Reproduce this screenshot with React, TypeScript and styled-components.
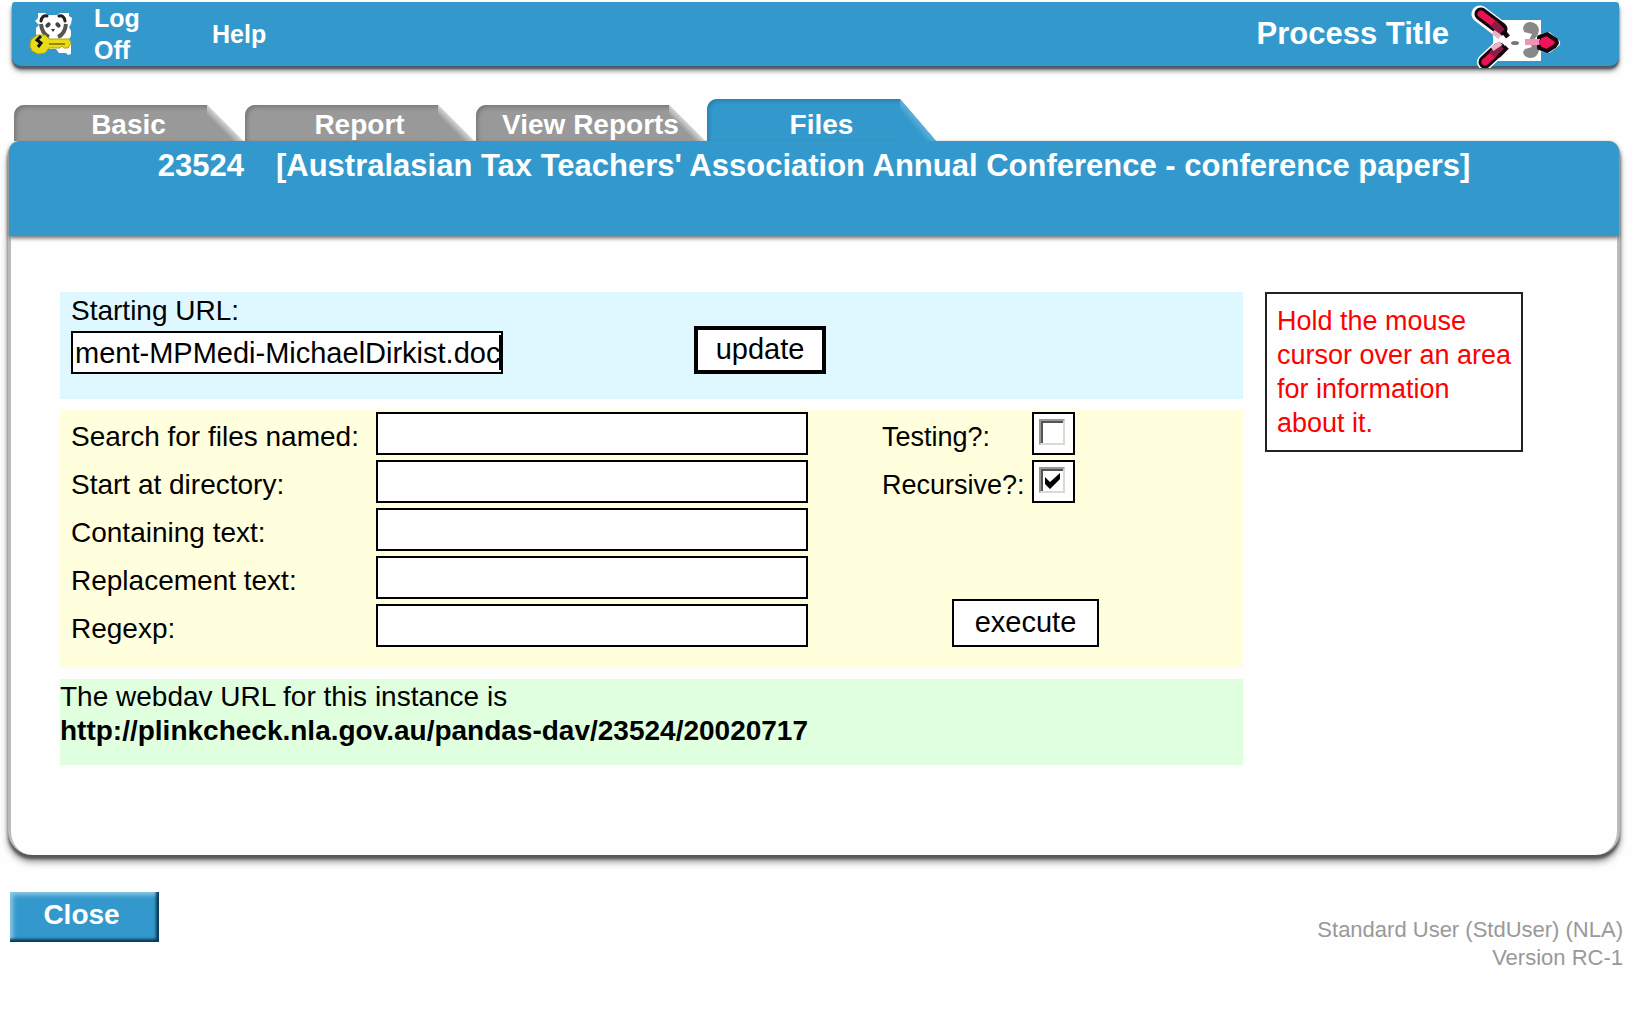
import React from "react";
import styled, { createGlobalStyle } from "styled-components";

const blue = "#3399cc";
const sans = '"Liberation Sans", Arial, sans-serif';

const GlobalStyle = createGlobalStyle`
  * { box-sizing: border-box; }
  body { margin: 0; background: #fefefe; font-family: ${sans}; font-size: 28px; line-height: 34px; color: #000; }
  button, input { font-family: inherit; }
`;

const Page = styled.div`
  padding: 2px 22px 60px 10px;
`;

const TopBar = styled.header`
  display: flex;
  align-items: center;
  height: 64px;
  margin: 0 4px 0 2px;
  padding: 0 58px 0 17px;
  background: ${blue};
  border-radius: 3px 3px 9px 9px;
  box-shadow: 0 3px 2px #4d5a63, 0 5px 5px rgba(0, 0, 0, 0.45);
`;

const BarLinks = styled.nav`
  display: flex;
  align-items: center;
  gap: 54px;
  padding-left: 20px;
`;

const BarLink = styled.a`
  max-width: 64px;
  color: #fff;
  font-size: 25px;
  font-weight: bold;
  line-height: 32px;
  text-decoration: none;
`;

const ProcessTitle = styled.span`
  margin-left: auto;
  margin-right: 22px;
  color: #fff;
  font-size: 31px;
  font-weight: bold;
`;

const TabList = styled.nav`
  display: flex;
  align-items: flex-end;
  gap: 2px;
  height: 42px;
  margin-top: 33px;
  padding-left: 4px;
`;

const Tab = styled.button<{ $active?: boolean }>`
  position: relative;
  width: 229px;
  height: ${(p) => (p.$active ? "42px" : "36px")};
  padding: ${(p) => (p.$active ? "10px" : "4px")} 0 0;
  border: 0;
  border-radius: 10px 0 0 0;
  background: ${(p) => (p.$active ? blue : "#999")};
  box-shadow: inset 2px 2px 4px ${(p) => (p.$active ? "#2b80ab" : "#777")};
  color: #fff;
  font-size: 28px;
  font-weight: bold;
  line-height: 32px;

  &::after {
    content: "";
    position: absolute;
    top: 0;
    right: 0;
    width: 36px;
    height: 100%;
    background: linear-gradient(
      to top right,
      ${(p) => (p.$active ? blue : "#999")} 36%,
      ${(p) => (p.$active ? "#5fb0da" : "#d4d4d4")} 50%,
      #fefefe 51%
    );
  }
`;

const TabText = styled.span`
  position: relative;
  z-index: 1;
`;

const Panel = styled.main`
  border: solid #bbb;
  border-width: 0 3px;
  margin: 0 3px 0 -2px;
  border-radius: 14px 14px 24px 24px;
  background: #fefefe;
  box-shadow: 0 4px 3px #555, 0 7px 7px rgba(0, 0, 0, 0.4);
`;

const PanelTitle = styled.h1`
  display: flex;
  justify-content: center;
  gap: 32px;
  height: 95px;
  margin: 0 -2px;
  padding: 8px 0 0;
  border-radius: 10px 10px 0 0;
  background: ${blue};
  box-shadow: 0 2px 4px #666;
  color: #fff;
  font-size: 31px;
  line-height: 34px;
`;

const Content = styled.div`
  display: grid;
  grid-template-columns: minmax(0, 1fr) 258px;
  gap: 22px;
  align-items: start;
  padding: 56px 94px 90px 49px;
`;

const Sections = styled.div`
  display: grid;
  gap: 11px;
`;

const UrlForm = styled.form`
  display: flex;
  align-items: flex-start;
  gap: 191px;
  height: 107px;
  padding: 2px 11px;
  background: #dff8ff;
`;

const UrlField = styled.div`
  position: relative;
  display: grid;
  gap: 3px;
  width: 432px;
`;

const TextInput = styled.input`
  width: 432px;
  height: 43px;
  padding: 2px 2px 0;
  border: 2px solid #000;
  border-radius: 0;
  outline: 0;
  background: #fff;
  font-size: 29px;
`;

const Caret = styled.i`
  position: absolute;
  right: 0;
  bottom: 4px;
  width: 4px;
  height: 35px;
  background: #000;
`;

const ActionButton = styled.button<{ $default?: boolean }>`
  width: ${(p) => (p.$default ? "132px" : "147px")};
  height: 48px;
  padding: 0 0 2px;
  border: ${(p) => (p.$default ? "4px" : "2px")} solid #000;
  background: #fff;
  color: #000;
  font-size: 29px;
  line-height: 34px;
`;

const UpdateSlot = styled.div`
  padding-top: 32px;
`;

const SearchForm = styled.form`
  display: grid;
  grid-template-columns: 737px 217px;
  column-gap: 74px;
  padding: 2px 11px 21px;
  background: #ffffdd;
`;

const Rows = styled.div`
  display: grid;
  align-content: start;
  gap: 5px;
`;

const Row = styled.div<{ $option?: boolean }>`
  display: grid;
  grid-template-columns: ${(p) => (p.$option ? "150px" : "305px")} auto;
  align-items: center;
  justify-content: start;
  font-size: ${(p) => (p.$option ? "27px" : "28px")};
`;

const FieldLabel = styled.label`
  padding-top: 6px;
`;

const Options = styled.div`
  display: flex;
  flex-direction: column;
  justify-content: space-between;
`;

const CheckFrame = styled.span`
  display: flex;
  width: 43px;
  height: 43px;
  padding: 5px;
  border: 2px solid #000;
  background: #fff;
`;

const CheckBox = styled.input`
  appearance: none;
  width: 26px;
  height: 26px;
  margin: 0;
  border: 2px solid;
  border-color: #999 #ddd8d0 #ddd8d0 #999;
  box-shadow: inset 2px 2px 0 #555;
  background: #fff;

  &:checked {
    background: #fff
      url("data:image/svg+xml,%3Csvg xmlns='http://www.w3.org/2000/svg' viewBox='0 0 22 22'%3E%3Cpath d='M4 8l5 5L19 4v6L9 20l-5-5z'/%3E%3C/svg%3E")
      center / 22px 22px no-repeat;
  }
`;

const ExecuteSlot = styled.div`
  display: flex;
  justify-content: flex-end;
`;

const DavNote = styled.section`
  height: 86px;
  padding-top: 1px;
  background: #dfffdf;
`;

const DavUrl = styled.strong`
  display: block;
`;

const HelpBox = styled.aside`
  min-height: 159px;
  padding: 10px 0 10px 10px;
  border: 2px solid #222;
  color: #f00;
  font-size: 27px;
`;

const Footer = styled.footer`
  display: flex;
  justify-content: space-between;
  padding-top: 37px;
`;

const CloseButton = styled.button`
  width: 149px;
  height: 50px;
  padding: 0 6px 4px 0;
  border: 0;
  background: ${blue};
  box-shadow: inset -3px -3px 3px #0a3a56, inset 3px 3px 4px #8cc8e6;
  color: #fff;
  font-size: 28px;
  font-weight: bold;
`;

const Version = styled.p`
  margin: 24px 0 0;
  color: #999;
  font-size: 22px;
  line-height: 28px;
  text-align: right;
`;

const Icon = styled.svg`
  display: block;
  flex: none;
`;

const PandaKey = () => (
  <Icon width="45" height="46" viewBox="0 0 45 46" aria-hidden="true">
    <path d="M9 2h7l3 2h9l3-2h9v3l3 2-1 6-2 3 2 4v5l-2 3 2 3v12l-3 1-2-2H30l-3-4H9l-1-4 2-4-3-3V17l3-3-4-4 3-3z" fill="#fff" />
    <path d="M12 10q1-6 6-5M36 10q-1-6-6-5" fill="none" stroke="#222" strokeWidth="3" strokeLinecap="round" />
    <path d="M12 13q1 10 8 13M37 13q-1 10-8 13" fill="none" stroke="#555" strokeWidth="4" />
    <ellipse cx="19" cy="14" rx="3" ry="2" fill="#444" transform="rotate(-45 19 14)" />
    <ellipse cx="29" cy="14" rx="3" ry="2" fill="#444" transform="rotate(45 29 14)" />
    <path d="M22 18h4l-2 3z" fill="#333" />
    <path d="M2 29l6-5h8l4 4h20l2 4-3 5h-4l-2-2-2 2H20l-4 5-7 1-6-3-2-5z" fill="#e8dc18" stroke="#b5a300" strokeWidth="1" />
    <path d="M20 33h16" stroke="#98850a" strokeWidth="2" />
    <path d="M12 25l-4 4 4 3-3 4" fill="none" stroke="#111" strokeWidth="3" />
  </Icon>
);

const ProcessLogo = () => (
  <Icon width="90" height="68" viewBox="0 0 90 68" aria-hidden="true">
    <g stroke="#fff" strokeLinecap="round" strokeLinejoin="round" fill="#fff">
      <path d="M9 14l21 16" strokeWidth="17" />
      <path d="M14 62l16-15" strokeWidth="16" />
      <path d="M70 38l7-2 8 7-8 6-7-2z" strokeWidth="8" />
    </g>
    <path d="M22 20h48v41H22z" fill="#fff" />
    <path d="M52 28q1-6 8-6 7 1 8 8-1 7-6 10h-4l3-6-8-2zM52 52q1 6 8 6 7-1 8-8-1-7-6-8h-4l3 5-7 2z" fill="#888" />
    <ellipse cx="44" cy="43" rx="4" ry="2" fill="#777" />
    <path d="M10 14l20 15M14 62l14-13" stroke="#16060d" strokeWidth="13" strokeLinecap="round" />
    <path d="M28 26l9 11M27 56l9-9" stroke="#16060d" strokeWidth="5" />
    <path d="M10 14l12 9M14 62l8-7" stroke="#e71455" strokeWidth="7" strokeLinecap="round" />
    <path d="M22 23l9 9M21 55l9-9" stroke="#8a1c45" strokeWidth="8" />
    <path d="M22 32l7 5M21 49l9-6" stroke="#e8b4c6" strokeWidth="5" />
    <path d="M68 37l8-3 9 6 1 3-2 3-8 5-8-3z" fill="#ee145c" stroke="#16060d" strokeWidth="4" strokeLinejoin="round" />
    <path d="M54 39h15v6H54z" fill="#f291b5" />
    <path d="M68 40h9v5h-9z" fill="#ee145c" />
  </Icon>
);

const textFields = [
  ["named", "Search for files named:"],
  ["directory", "Start at directory:"],
  ["containing", "Containing text:"],
  ["replacement", "Replacement text:"],
  ["regexp", "Regexp:"],
];

const options = [
  { id: "testing", label: "Testing?:", checked: false },
  { id: "recursive", label: "Recursive?:", checked: true },
];

export default function App() {
  return (
    <>
      <GlobalStyle />
      <Page>
        <TopBar>
          <PandaKey />
          <BarLinks>
            <BarLink href="#logoff">Log Off</BarLink>
            <BarLink href="#help">Help</BarLink>
          </BarLinks>
          <ProcessTitle>Process Title</ProcessTitle>
          <ProcessLogo />
        </TopBar>
        <TabList>
          {["Basic", "Report", "View Reports", "Files"].map((name) => (
            <Tab key={name} type="button" $active={name === "Files"}>
              <TabText>{name}</TabText>
            </Tab>
          ))}
        </TabList>
        <Panel>
          <PanelTitle>
            <span>23524</span>
            <span>[Australasian Tax Teachers' Association Annual Conference - conference papers]</span>
          </PanelTitle>
          <Content>
            <Sections>
              <UrlForm>
                <UrlField>
                  <label htmlFor="url">Starting URL:</label>
                  <TextInput id="url" defaultValue="ment-MPMedi-MichaelDirkist.doc" />
                  <Caret />
                </UrlField>
                <UpdateSlot>
                  <ActionButton type="button" $default>update</ActionButton>
                </UpdateSlot>
              </UrlForm>
              <SearchForm>
                <Rows>
                  {textFields.map(([id, label]) => (
                    <Row key={id}>
                      <FieldLabel htmlFor={id}>{label}</FieldLabel>
                      <TextInput id={id} />
                    </Row>
                  ))}
                </Rows>
                <Options>
                  <Rows>
                    {options.map((o) => (
                      <Row key={o.id} $option>
                        <FieldLabel htmlFor={o.id}>{o.label}</FieldLabel>
                        <CheckFrame>
                          <CheckBox id={o.id} type="checkbox" defaultChecked={o.checked} />
                        </CheckFrame>
                      </Row>
                    ))}
                  </Rows>
                  <ExecuteSlot>
                    <ActionButton type="button">execute</ActionButton>
                  </ExecuteSlot>
                </Options>
              </SearchForm>
              <DavNote>
                The webdav URL for this instance is
                <DavUrl>http://plinkcheck.nla.gov.au/pandas-dav/23524/20020717</DavUrl>
              </DavNote>
            </Sections>
            <HelpBox>Hold the mouse cursor over an area for information about it.</HelpBox>
          </Content>
        </Panel>
        <Footer>
          <CloseButton type="button">Close</CloseButton>
          <Version>
            Standard User (StdUser) (NLA)
            <br />
            Version RC-1
          </Version>
        </Footer>
      </Page>
    </>
  );
}
